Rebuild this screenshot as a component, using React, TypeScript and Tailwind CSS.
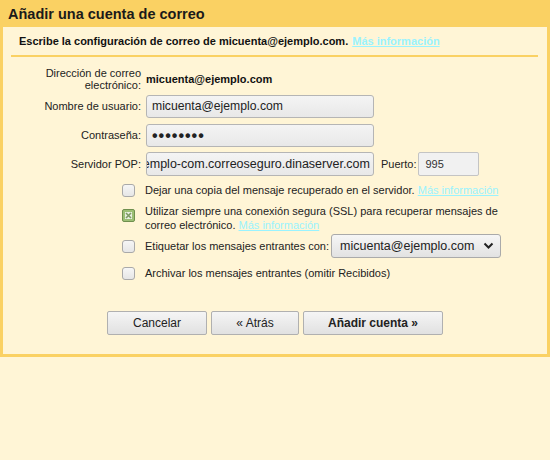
import React from "react";

const font = { fontFamily: '"Liberation Sans", Arial, sans-serif' };

function Checkbox({ checked }: { checked?: boolean }) {
  if (checked) {
    return (
      <div className="w-[13px] h-[13px] rounded-[2px] border border-[#6f8f4e] bg-[#9cbf75] flex items-center justify-center shrink-0">
        <svg width="7" height="7" viewBox="0 0 7 7">
          <rect x="0" y="0" width="7" height="7" fill="#e8efe0" />
          <path d="M1 1 L6 6 M6 1 L1 6" stroke="#7d9a63" strokeWidth="1.6" />
        </svg>
      </div>
    );
  }
  return (
    <div className="w-[13px] h-[13px] rounded-[3px] border border-[#a9a9a9] bg-gradient-to-b from-[#f6f6f6] to-[#e6e6e6] shrink-0" />
  );
}

function Link({ children }: { children: React.ReactNode }) {
  return <span className="text-[#99f3ff] underline">{children}</span>;
}

export default function App() {
  return (
    <div className="w-[550px] h-[460px] bg-[#fff5d6] text-[#222]" style={font}>
      <div className="h-[27px] bg-[#fad163] flex items-center pl-[8px]">
        <span className="text-[14.5px] font-bold text-[#1a1a1a] leading-none pt-[1px]">Añadir una cuenta de correo</span>
      </div>
      <div className="border-x-[3px] border-b-[3px] border-[#fad163] bg-[#fff5d6] h-[330px]">
        <div className="h-[28px] flex items-center pl-[16px] text-[11px] font-bold text-[#111]">
          <span>Escribe la configuración de correo de micuenta@ejemplo.com.</span>
          <span className="ml-[4px]"><Link>Más información</Link></span>
        </div>
        <div className="h-[2px] bg-[#fad163] ml-[8px] mr-[9px]" />

        <div className="grid grid-cols-[138px_auto] gap-x-[5px] text-[11px] mt-[10px]">
          <div className="h-[24px] flex flex-col justify-center items-end text-right leading-[12px] text-[#222]">
            <span>Dirección de correo</span>
            <span>electrónico:</span>
          </div>
          <div className="h-[24px] flex items-center font-bold text-[11px] text-[#111]">micuenta@ejemplo.com</div>

          <div className="mt-[4px] h-[23px] flex items-center justify-end">Nombre de usuario:</div>
          <div className="mt-[4px] h-[23px] w-[228px] rounded-[3px] border border-[#b5b5b5] bg-gradient-to-b from-[#f4f4f4] to-[#e8e8e8] flex items-center px-[5px] text-[12.2px] text-[#222]">
            micuenta@ejemplo.com
          </div>

          <div className="mt-[6px] h-[23px] flex items-center justify-end">Contraseña:</div>
          <div className="mt-[6px] h-[23px] w-[228px] rounded-[3px] border border-[#b5b5b5] bg-gradient-to-b from-[#f4f4f4] to-[#e8e8e8] flex items-center px-[5px] text-[#222]">
            <span className="tracking-[1px] font-bold text-[16px] leading-none">••••••••</span>
          </div>

          <div className="mt-[5px] h-[24px] flex items-center justify-end">Servidor POP:</div>
          <div className="mt-[5px] h-[24px] flex items-center">
            <div className="h-[24px] w-[228px] rounded-[3px] border border-[#b5b5b5] bg-gradient-to-b from-[#f4f4f4] to-[#e8e8e8] flex items-center justify-end overflow-hidden pr-[3px] text-[12.5px] text-[#222] whitespace-nowrap">
              pop.ejemplo-com.correoseguro.dinaserver.com
            </div>
            <span className="ml-[7px] text-[11px]">Puerto:</span>
            <div className="ml-[2px] h-[24px] w-[61px] border border-[#c4c4c4] rounded-[2px] bg-[#f1f1f1] flex items-center px-[6px] text-[11px] text-[#333]">
              995
            </div>
          </div>
        </div>

        <div className="pl-[119px] text-[11px] text-[#222]">
          <div className="mt-[8px] h-[13px] flex items-center">
            <Checkbox />
            <span className="ml-[10px]">
              Dejar una copia del mensaje recuperado en el servidor. <Link>Más información</Link>
            </span>
          </div>
          <div className="mt-[7px] flex items-start">
            <div className="mt-[5px]"><Checkbox checked /></div>
            <span className="ml-[10px] leading-[14px] w-[370px]">
              Utilizar siempre una conexión segura (SSL) para recuperar mensajes de correo electrónico. <Link>Más información</Link>
            </span>
          </div>
          <div className="mt-[2px] h-[24px] flex items-center">
            <Checkbox />
            <span className="ml-[10px]">Etiquetar los mensajes entrantes con:</span>
            <div className="ml-[2px] h-[24px] w-[170px] rounded-[3px] border border-[#aaa] bg-gradient-to-b from-[#f6f6f6] to-[#e2e2e2] flex items-center pl-[8px] pr-[6px] text-[12.5px] text-[#222]">
              <span className="flex-1">micuenta@ejemplo.com</span>
              <svg width="11" height="8" viewBox="0 0 11 8">
                <path d="M1.5 1.5 L5.5 5.5 L9.5 1.5" stroke="#222" strokeWidth="2" fill="none" />
              </svg>
            </div>
          </div>
          <div className="mt-[9px] h-[13px] flex items-center">
            <Checkbox />
            <span className="ml-[10px]">Archivar los mensajes entrantes (omitir Recibidos)</span>
          </div>
        </div>

        <div className="mt-[31px] pl-[104px] flex gap-[4px] text-[12px] text-[#222]">
          <div className="h-[24px] w-[100px] rounded-[2px] border border-[#b0b0b0] bg-gradient-to-b from-[#f5f5f5] to-[#e1e1e1] flex items-center justify-center">Cancelar</div>
          <div className="h-[24px] w-[88px] rounded-[2px] border border-[#b0b0b0] bg-gradient-to-b from-[#f5f5f5] to-[#e1e1e1] flex items-center justify-center">« Atrás</div>
          <div className="h-[24px] w-[140px] rounded-[2px] border border-[#b0b0b0] bg-gradient-to-b from-[#f5f5f5] to-[#e1e1e1] flex items-center justify-center font-bold">Añadir cuenta »</div>
        </div>
      </div>
    </div>
  );
}
